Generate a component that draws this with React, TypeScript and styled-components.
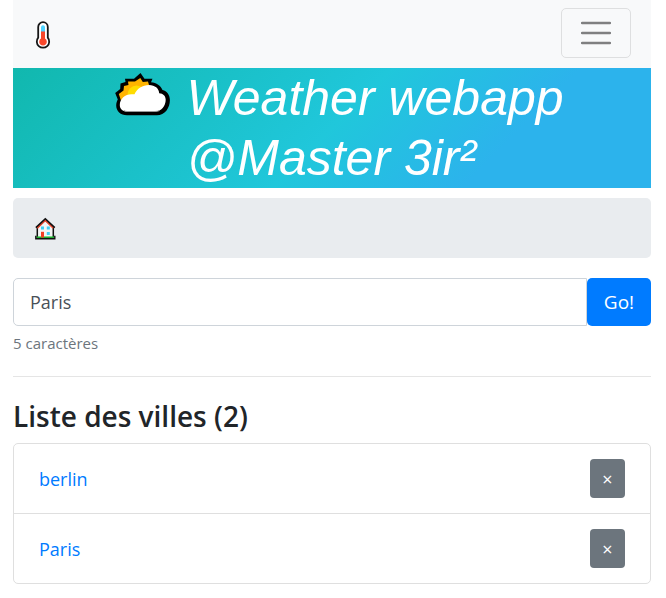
import React, { useState } from "react";
import styled, { createGlobalStyle } from "styled-components";

const GlobalStyle = createGlobalStyle`
  *, *::before, *::after { box-sizing: border-box; }
  body {
    margin: 0;
    background: #fff;
    color: #212529;
    font-family: "Segoe UI", "Open Sans", "Noto Sans", sans-serif;
    font-size: 18px;
    line-height: 30px;
  }
  button, input { font: inherit; }
`;

const Page = styled.div`
  padding: 0 15px 14px 13px;
`;

const Navbar = styled.nav`
  display: flex;
  align-items: flex-end;
  justify-content: space-between;
  padding: 8px 20px 10px;
  background: #f8f9fa;
`;

const BrandLink = styled.a`
  display: flex;
  padding-bottom: 8px;
`;

const HomeLink = styled.a`
  display: flex;
`;

const Toggler = styled.button`
  display: flex;
  align-items: center;
  justify-content: center;
  width: 70px;
  height: 50px;
  padding: 0;
  border: 1px solid #dedfe0;
  border-radius: 5px;
  background: transparent;
`;

const Banner = styled.header`
  display: flex;
  justify-content: center;
  align-items: flex-start;
  gap: 17px;
  padding-left: 16px;
  background: linear-gradient(135deg, #11b8ae 0%, #20c7db 50%, #2cb3ec 75%);
`;

const BannerIcon = styled.svg`
  flex: none;
  margin-top: 4px;
`;

const Title = styled.h1`
  max-width: 380px;
  margin: 0;
  color: #fff;
  font: italic 400 50px/60px Arial, "Liberation Sans", sans-serif;
`;

const Breadcrumb = styled.nav`
  display: flex;
  align-items: center;
  height: 60px;
  margin: 10px 0 20px;
  padding: 0 20px;
  border-radius: 5px;
  background: #e9ecef;
`;

const SearchForm = styled.form`
  display: flex;
`;

const CityInput = styled.input`
  flex: 1;
  min-width: 0;
  height: 48px;
  padding: 0 16px;
  border: 1px solid #ced4da;
  border-radius: 5px 0 0 5px;
  background: #fff;
  color: #495057;
`;

const GoButton = styled.button`
  width: 64px;
  height: 48px;
  padding: 0;
  border: 0;
  border-radius: 5px;
  background: #007bff;
  color: #fff;
  font-size: 19px;
`;

const Help = styled.small`
  display: block;
  margin-top: 5px;
  color: #6c757d;
  font-size: 15px;
  line-height: 24px;
`;

const Divider = styled.hr`
  margin: 21px 0;
  border: 0;
  border-top: 1px solid #e5e5e5;
`;

const Heading = styled.h2`
  margin: 0 0 9px;
  font-size: 28px;
  font-weight: 600;
  line-height: 36px;
`;

const CityList = styled.ul`
  margin: 0;
  padding: 0;
  border: 1px solid #dfdfdf;
  border-radius: 5px;
  list-style: none;
`;

const CityRow = styled.li`
  display: flex;
  align-items: center;
  justify-content: space-between;
  padding: 15px 25px;

  & + & { border-top: 1px solid #dfdfdf; }
`;

const CityLink = styled.a`
  color: #007bff;
  text-decoration: none;
`;

const RemoveButton = styled.button`
  display: flex;
  align-items: center;
  justify-content: center;
  width: 35px;
  height: 39px;
  padding: 0;
  border: 0;
  border-radius: 4px;
  background: #6c757d;
  color: #fff;
  line-height: 24px;
`;

const Thermometer = () => (
  <svg width="20" height="30" viewBox="0 0 20 30" aria-hidden="true">
    <path
      d="M5.2 7a4.800 4.800 0 0 1 9.600 0v10.600a6.200 6.200 0 1 1-9.600 0z"
      fill="#fff"
      stroke="#161616"
      strokeWidth="1.8"
    />
    <path d="M8 12V7.300a2 2 0 0 1 4 0V12z" fill="#50d3ff" />
    <path d="M8 11.500h4v7a3.800 3.800 0 1 1-4 0z" fill="#f8472b" />
  </svg>
);

const House = () => (
  <svg width="24" height="26" viewBox="0 0 24 26" aria-hidden="true">
    <path d="M4.3 12.5 12.3 5l8 7.5v10.2h-16z" fill="#f5f5f5" stroke="#111" strokeWidth="1.5" />
    <path d="m4.2 13.2 8.1-7.8 8.1 7.8" fill="none" stroke="#e9482f" strokeWidth="1.6" />
    <path d="M2.8 12.6 12.3 3.7l9.5 8.9" fill="none" stroke="#111" strokeWidth="1.5" />
    <path d="M3.5 22.2h17.6" stroke="#20b832" strokeWidth="1.5" />
    <path d="M2.8 20.8v3h19v-3" fill="none" stroke="#111" strokeWidth="1.4" />
    <path d="M8 16.8h3v5.7H8z" fill="#f33f24" />
    <path d="M8 11.5h3v3H8zM13.8 11.5h3v3h-3zM13.8 17h3v3h-3z" fill="#42d0f5" />
  </svg>
);

const MenuIcon = () => (
  <svg width="30" height="26" viewBox="0 0 30 26" aria-hidden="true">
    <path
      d="M1 3h28M1 13h28M1 23h28"
      stroke="#7f7f80"
      strokeWidth="2.5"
      strokeLinecap="round"
    />
  </svg>
);

const SunCloud = () => (
  <BannerIcon width="56" height="46" viewBox="0 0 56 46" aria-hidden="true">
    <path
      d="M26.500 1 30.500 6.700h8L37 10.200c5.500.5 9.800 3.300 11.500 7.800 4.500 1.200 7.400 5 7.400 10 0 8-5 15.300-13 15.300H13C6.500 43.300 2.200 39 2.200 33.500c0-2.500.7-4.500 1.600-6L1.200 21l5-4 .3-5.500L11.500 10 11 6.700h9z"
      fill="#000"
    />
    <path
      d="m26.300 6 2.500 4 5.200-.6 1 3.600-11 14-16 5-1.500-5L4.800 22 9.500 18.500 10 14l4.500-1-.5-3.500h7z"
      fill="#ffb400"
    />
    <circle cx="22.500" cy="22.500" r="9" fill="#ffdc00" />
    <path
      d="M13 39.500c-4.300 0-7.200-2.500-7.200-6.500 0-6 5.200-10.700 11.700-10.700h3C23 16.500 28.500 13 35 13c6 0 10 3.600 10.200 8.200 4 .2 6.500 2.800 6.500 6.500 0 6.500-4.500 11.800-10.500 11.800z"
      fill="#fff"
    />
    <path d="M10 38.600c1.100.6 2 .9 3 .9h28c1.700 0 3.200-.4 4.500-.9" fill="none" stroke="#999" />
  </BannerIcon>
);

export default function App() {
  const [city, setCity] = useState("Paris");
  const [cities, setCities] = useState(["berlin", "Paris"]);

  const addCity = (event: React.FormEvent) => {
    event.preventDefault();
    if (city && !cities.includes(city)) setCities([...cities, city]);
  };

  return (
    <>
      <GlobalStyle />
      <Page>
        <Navbar>
          <BrandLink href="#" aria-label="Weather">
            <Thermometer />
          </BrandLink>
          <Toggler type="button" aria-label="Menu">
            <MenuIcon />
          </Toggler>
        </Navbar>
        <Banner>
          <SunCloud />
          <Title>Weather webapp @Master 3ir²</Title>
        </Banner>
        <Breadcrumb>
          <HomeLink href="#" aria-label="Accueil">
            <House />
          </HomeLink>
        </Breadcrumb>
        <main>
          <SearchForm onSubmit={addCity}>
            <CityInput
              type="text"
              aria-label="Ville"
              aria-describedby="city-help"
              value={city}
              onChange={(event) => setCity(event.target.value)}
            />
            <GoButton type="submit">Go!</GoButton>
          </SearchForm>
          <Help id="city-help">{city.length} caractères</Help>
          <Divider />
          <Heading>Liste des villes ({cities.length})</Heading>
          <CityList>
            {cities.map((name) => (
              <CityRow key={name}>
                <CityLink href="#">{name}</CityLink>
                <RemoveButton
                  type="button"
                  aria-label={`Supprimer ${name}`}
                  onClick={() => setCities(cities.filter((item) => item !== name))}
                >
                  ×
                </RemoveButton>
              </CityRow>
            ))}
          </CityList>
        </main>
      </Page>
    </>
  );
}
